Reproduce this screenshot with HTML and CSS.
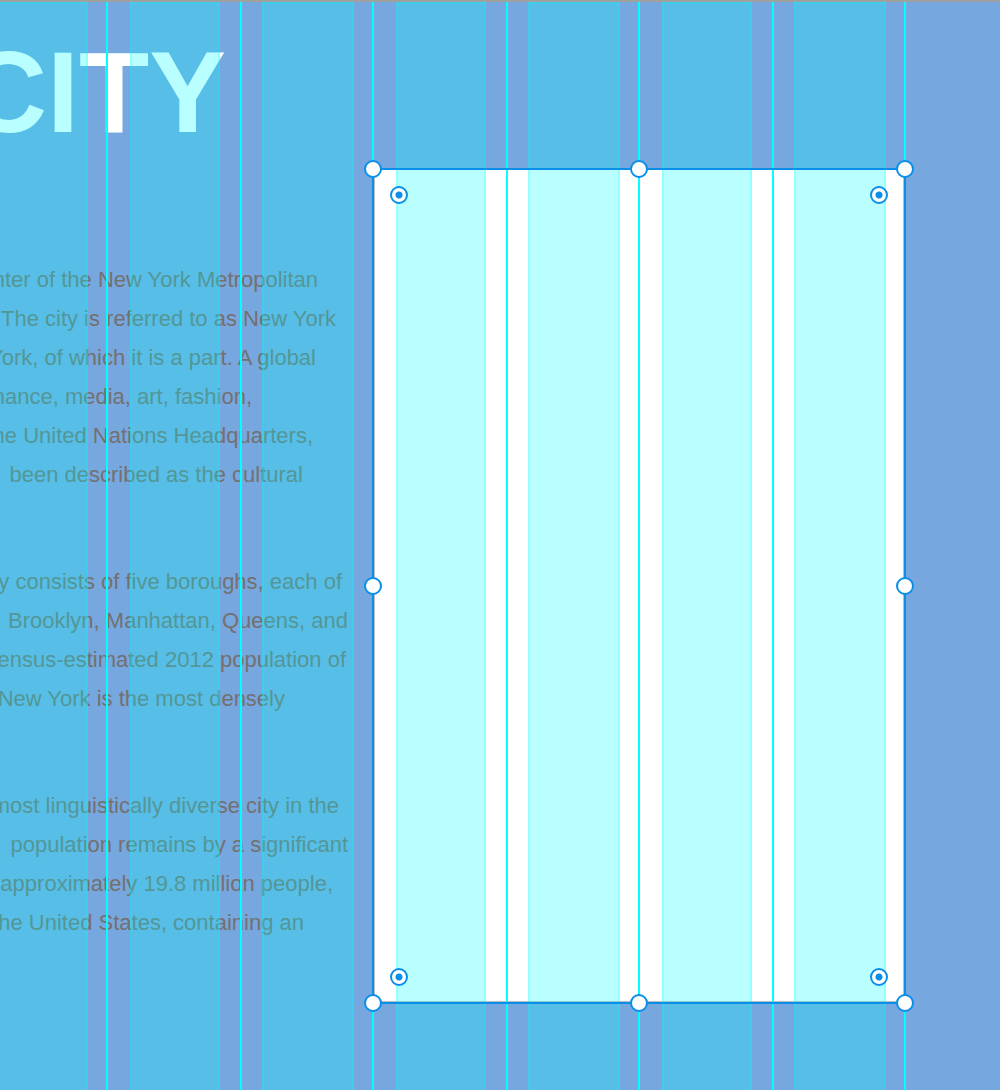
FILE: index.html
```
<!DOCTYPE html>
<html lang="en">
<head>
<meta charset="utf-8">
<title>New York City – layout grid</title>
<link rel="stylesheet" href="styles.css">
</head>
<body>
<main class="artboard">
  <article class="copy">
    <h1 class="title">CITY</h1>
    <p class="para">
      <span class="line" style="--inset:32px">center of the New York Metropolitan</span>
      <span class="line" style="--inset:14px">The city is referred to as New York</span>
      <span class="line" style="--inset:34px">York, of which it is a part. A global</span>
      <span class="line" style="--inset:98px">finance, media, art, fashion,</span>
      <span class="line" style="--inset:37px">the United Nations Headquarters,</span>
      <span class="line" style="--inset:47px">been described as the cultural</span>
    </p>
    <p class="para">
      <span class="line" style="--inset:8px">City consists of five boroughs, each of</span>
      <span class="line" style="--inset:2px">Brooklyn, Manhattan, Queens, and</span>
      <span class="line" style="--inset:4px">census-estimated 2012 population of</span>
      <span class="line" style="--inset:65px">New York is the most densely</span>
    </p>
    <p class="para">
      <span class="line" style="--inset:11px">most linguistically diverse city in the</span>
      <span class="line" style="--inset:2px">population remains by a significant</span>
      <span class="line" style="--inset:17px">approximately 19.8 million people,</span>
      <span class="line" style="--inset:46px">the United States, containing an</span>
    </p>
  </article>
  <div class="shape"></div>
  <div class="grid"><i></i><i></i><i></i><i></i><i></i><i></i><i></i></div>
  <div class="guides"><i></i><i></i><i></i><i></i><i></i><i></i><i></i></div>
  <div class="selection">
    <i class="handle top left"></i><i class="handle top center"></i><i class="handle top right"></i>
    <i class="handle middle left"></i><i class="handle middle right"></i>
    <i class="handle bottom left"></i><i class="handle bottom center"></i><i class="handle bottom right"></i>
    <i class="radius r-top r-left"></i><i class="radius r-top r-right"></i>
    <i class="radius r-bottom r-left"></i><i class="radius r-bottom r-right"></i>
  </div>
</main>
</body>
</html>
```
FILE: styles.css
```
* { box-sizing: border-box; }
body { margin: 0; font-family: "Liberation Sans", Arial, sans-serif; }
.artboard {
  position: relative;
  min-height: 100vh;
  overflow: hidden;
  border-top: 2px solid #9fa0a0;
  background: #76a7df;
}
.copy { width: 350px; padding-top: 26px; }
.title {
  display: flex;
  justify-content: flex-end;
  margin: 0 124px 104px 0;
  font-size: 115px;
  line-height: 128px;
  color: #fff;
}
.para { margin: 0 0 68px; font-size: 22px; line-height: 39px; color: #74706f; }
.line {
  display: flex;
  justify-content: flex-end;
  padding-right: var(--inset);
  white-space: nowrap;
}
.shape, .selection { position: absolute; left: 372px; top: 166px; width: 534px; height: 836px; }
.shape { background: #fff; border: 3px solid #b9bcc0; border-top-width: 2px; }
.grid, .guides { position: absolute; inset: 0; display: grid; }
.grid { grid-template-columns: 88px 90px 92px 90px 92px 90px 92px; column-gap: 42px; }
.grid i { background: rgba(0, 255, 255, .27); border: 2px solid rgba(0, 255, 255, .2); border-bottom: 0; }
.grid i:first-child { border-left: 0; }
.guides { grid-template-columns: 108px 134px 132px 134px 132px 134px 132px; }
.guides i { border-right: 2px solid #0ff; }
.selection { border: 2px solid #0a8fe8; }
.handle, .radius {
  position: absolute;
  width: 18px;
  height: 18px;
  border: 2px solid #0a8fe8;
  border-radius: 50%;
  background: #fff;
}
.radius { background: radial-gradient(circle, #0a8fe8 3px, #fff 4px); }
.top { top: -10px; }
.middle { top: calc(50% - 9px); }
.bottom { bottom: -10px; }
.left { left: -10px; }
.center { left: calc(50% - 9px); }
.right { right: -10px; }
.r-top { top: 16px; }
.r-bottom { bottom: 16px; }
.r-left { left: 16px; }
.r-right { right: 16px; }
```
